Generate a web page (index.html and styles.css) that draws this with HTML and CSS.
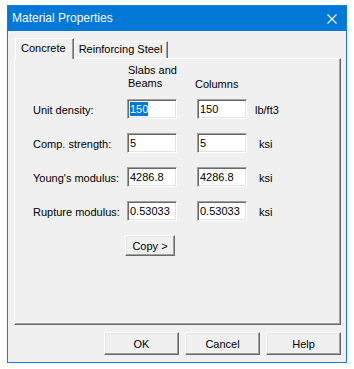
FILE: index.html
```html
<!DOCTYPE html>
<html>
<head>
    <meta charset="UTF-8">
    <title>Material Properties</title>
    <link rel="stylesheet" href="styles.css">
</head>
<body>
    <div class="window">
        <div class="title-bar">
            <span class="title-text">Material Properties</span>
            <svg class="close" width="10" height="10" viewBox="0 0 10 10">
                <path d="M0.5 0.5 L9.5 9.5 M9.5 0.5 L0.5 9.5" stroke="#fff" stroke-width="1.1" fill="none" />
            </svg>
        </div>
        <div class="dialog">
            <div class="tabs">
                <span class="tab active">Concrete</span>
                <span class="tab">Reinforcing Steel</span>
            </div>
            <div class="panel">
                <div class="grid">
                    <span class="head">Slabs and Beams</span>
                    <span class="head head-col">Columns</span>

                    <span class="label">Unit density:</span>
                    <div class="field field-1"><span class="selected">150</span></div>
                    <div class="field field-2">150</div>
                    <span class="unit unit-wide">lb/ft3</span>

                    <span class="label">Comp. strength:</span>
                    <div class="field field-1">5</div>
                    <div class="field field-2">5</div>
                    <span class="unit">ksi</span>

                    <span class="label">Young's modulus:</span>
                    <div class="field field-1">4286.8</div>
                    <div class="field field-2">4286.8</div>
                    <span class="unit">ksi</span>

                    <span class="label">Rupture modulus:</span>
                    <div class="field field-1">0.53033</div>
                    <div class="field field-2">0.53033</div>
                    <span class="unit">ksi</span>

                    <button class="btn copy">Copy &gt;</button>
                </div>
            </div>
            <div class="buttons">
                <button class="btn big">OK</button>
                <button class="btn big">Cancel</button>
                <button class="btn big">Help</button>
            </div>
        </div>
    </div>
</body>
</html>
```

FILE: styles.css
```css
* {
  margin: 0px;
  padding: 0px;
  box-sizing: border-box;
}
html, body {
  height: 100%;
  background: #fff;
}
body {
  font-family: "Liberation Sans", Arial, sans-serif;
  font-size: 11px;
  color: #000;
  padding: 5px 0px 0px 7px;
}
.window {
  width: 340px;
  height: 358px;
  border: 1px solid #1a7fd4;
  background: #f0f0f0;
  display: flex;
  flex-direction: column;
}
.title-bar {
  height: 25px;
  background: #0078d7;
  color: #fff;
  display: flex;
  align-items: center;
  padding: 0px 9px 0px 4px;
  flex-shrink: 0;
}
.title-text {
  flex: 1;
  font-size: 12px;
  padding-bottom: 1px;
}
.close {
  display: block;
}
.dialog {
  flex: 1;
  display: flex;
  flex-direction: column;
  padding: 7px 5px 0px 6px;
}
.tabs {
  height: 20px;
  display: flex;
  align-items: flex-end;
  padding-left: 1px;
}
.tab {
  height: 17px;
  line-height: 15px;
  padding: 0px 5px 0px 4px;
  border-top: 1px solid #fff;
  border-left: 1px solid #fff;
  border-right: 1px solid #696969;
  box-shadow: inset -1px 0px #a0a0a0;
  white-space: nowrap;
}
.tab.active {
  height: 21px;
  margin-bottom: -1px;
  line-height: 18px;
  padding: 0px 7px 0px 5px;
  background: #f0f0f0;
  position: relative;
  z-index: 1;
}
.panel {
  height: 267px;
  border-top: 1px solid #fff;
  border-left: 1px solid #fff;
  border-right: 1px solid #696969;
  border-bottom: 1px solid #696969;
  box-shadow: inset -1px -1px #a0a0a0;
  padding: 5px 0px 0px 18px;
}
.grid {
  display: grid;
  grid-template-columns: 94px 50px 20px 50px 8px auto;
  grid-template-rows: 21px;
  grid-auto-rows: 20px;
  row-gap: 14px;
  align-items: center;
}
.head {
  grid-column: 2 / 4;
  width: 50px;
  line-height: 13px;
  padding-left: 1px;
  align-self: start;
  height: 35px;
}
.head-col {
  grid-column: 4 / 6;
  margin-left: -3px;
  padding-top: 14px;
  width: auto;
}
.label {
  grid-column: 1;
  white-space: nowrap;
  padding-top: 2px;
}
.field {
  height: 20px;
  background: #fff;
  border: 1px solid;
  border-color: #a0a0a0 #fff #fff #a0a0a0;
  box-shadow: inset 1px 1px #696969, inset -1px -1px #e3e3e3;
  padding: 0px 2px;
  line-height: 18px;
  white-space: nowrap;
  overflow: hidden;
}
.field-1 {
  grid-column: 2;
}
.field-2 {
  grid-column: 4;
}
.selected {
  background: #0078d7;
  color: #fff;
  display: inline-block;
  line-height: 14px;
}
.unit {
  grid-column: 6;
  padding-left: 4px;
  padding-top: 2px;
}
.unit-wide {
  padding-left: 0px;
}
.btn {
  font-family: "Liberation Sans", Arial, sans-serif;
  font-size: 11px;
  color: #000;
  background: #f0f0f0;
  border: 1px solid;
  border-color: #fff #696969 #696969 #fff;
  box-shadow: inset -1px -1px #a0a0a0, inset 1px 1px #e3e3e3;
  outline: none;
}
.copy {
  grid-column: 2;
  width: 50px;
  height: 21px;
  margin-left: -2px;
  margin-top: 1px;
}
.buttons {
  display: flex;
  justify-content: flex-end;
  gap: 6px;
  padding-top: 7px;
}
.btn.big {
  width: 75px;
  height: 23px;
}
```
